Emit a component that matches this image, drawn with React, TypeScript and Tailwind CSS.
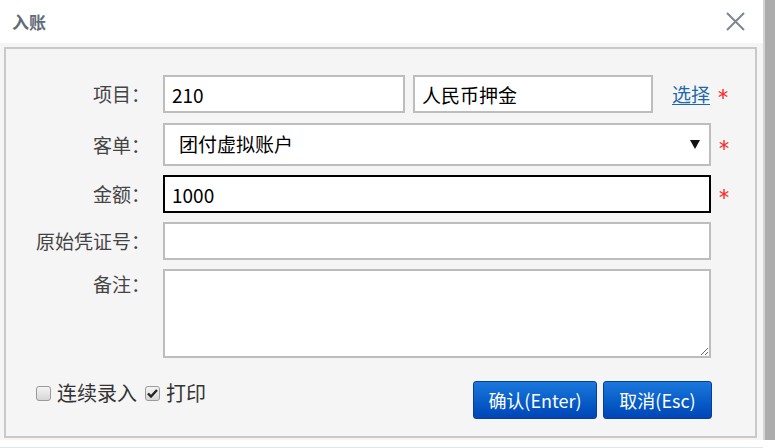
const font = "font-['Noto_Sans_CJK_SC','Noto_Sans',sans-serif]";

const Label = ({ text, top = false }: { text: string; top?: boolean }) => (
  <div className={`w-[144px] shrink-0 text-right text-[19px] text-[#444] ${top ? "self-start leading-[30px]" : "leading-[38px]"}`}>
    {text}
  </div>
);

// red required mark
const Star = () => (
  <svg className="ml-[8px] shrink-0" width="10" height="10" viewBox="0 0 10 10">
    <path d="M5 0v10M0.7 2.5l8.6 5M0.7 7.5l8.6-5" stroke="#ff2a2a" strokeWidth="1.4" />
  </svg>
);

const Check = ({ checked }: { checked?: boolean }) => (
  <span className="flex h-[15px] w-[15px] shrink-0 items-center justify-center rounded-[3px] border border-[#9a9a9a] bg-gradient-to-b from-[#f4f4f4] to-[#d6d6d6]">
    {checked && (
      <svg width="11" height="9" viewBox="0 0 11 9">
        <path d="M1 4.5l3 3L10 1" stroke="#222" strokeWidth="2.4" fill="none" />
      </svg>
    )}
  </span>
);

const App = () => {
  return (
    <div className={`flex h-[448px] w-[775px] overflow-hidden bg-white ${font}`}>
      <div className="flex w-[763px] flex-col">
        {/* header */}
        <div className="flex h-[43px] shrink-0 items-center justify-between bg-white pl-[12px] pr-[18px]">
          <span className="text-[17px] font-bold text-[#5f6b76]">入账</span>
          <svg width="19" height="19" viewBox="0 0 19 19">
            <path d="M1 1l17 17M18 1L1 18" stroke="#7d8790" strokeWidth="2" />
          </svg>
        </div>

        {/* body */}
        <div className="flex h-[397px] shrink-0 flex-col bg-[#f5f5f5] pl-[4px] pr-[6px] pt-[4px] pb-[2px]">
          <div className="flex flex-1 flex-col border-2 border-[#c9c9c9] pt-[26px]">
            {/* row 1 */}
            <div className="flex h-[38px] items-center">
              <Label text="项目：" />
              <input
                defaultValue="210"
                className="ml-[13px] h-[38px] w-[242px] border-2 border-[#bdbdbd] bg-white px-[7px] text-[19px] text-black outline-none"
              />
              <input
                defaultValue="人民币押金"
                className="ml-[8px] h-[38px] w-[240px] border-2 border-[#bdbdbd] bg-white px-[7px] text-[19px] text-black outline-none"
              />
              <a className="ml-[19px] text-[19px] text-[#1f6aa5] underline underline-offset-2">选择</a>
              <Star />
            </div>

            {/* row 2 */}
            <div className="mt-[10px] flex h-[43px] items-center">
              <Label text="客单：" />
              <div className="ml-[13px] flex h-[43px] w-[548px] items-center justify-between border-2 border-[#bdbdbd] bg-white pl-[14px] pr-[9px]">
                <span className="text-[19px] text-black">团付虚拟账户</span>
                <svg width="10" height="9" viewBox="0 0 10 9">
                  <path d="M0 0h10L5 9z" fill="#111" />
                </svg>
              </div>
              <Star />
            </div>

            {/* row 3 */}
            <div className="mt-[9px] flex h-[38px] items-center">
              <Label text="金额：" />
              <input
                defaultValue="1000"
                className="ml-[13px] h-[38px] w-[548px] border-2 border-black bg-white px-[7px] text-[19px] text-black outline-none"
              />
              <Star />
            </div>

            {/* row 4 */}
            <div className="mt-[9px] flex h-[38px] items-center">
              <Label text="原始凭证号：" />
              <input className="ml-[13px] h-[38px] w-[548px] border-2 border-[#bdbdbd] bg-white px-[7px] text-[19px] outline-none" />
            </div>

            {/* row 5 */}
            <div className="mt-[9px] flex items-start">
              <Label text="备注：" top />
              <textarea className="ml-[13px] h-[89px] w-[548px] border-2 border-[#bdbdbd] bg-white px-[7px] text-[19px] outline-none" />
            </div>

            {/* footer */}
            <div className="mt-[23px] flex items-start pl-[30px]">
              <div className="flex h-[24px] items-center">
                <Check />
                <span className="ml-[6px] text-[20px] leading-[24px] text-[#333]">连续录入</span>
                <span className="ml-[8px]">
                  <Check checked />
                </span>
                <span className="ml-[6px] text-[20px] leading-[24px] text-[#333]">打印</span>
              </div>

              <button className="ml-auto h-[38px] w-[124px] rounded-[3px] border border-[#0a3c9c] bg-gradient-to-b from-[#1b78dc] to-[#0045b6] text-[18px] text-white">
                确认(Enter)
              </button>
              <button className="ml-[6px] mr-[43px] h-[38px] w-[109px] rounded-[3px] border border-[#0a3c9c] bg-gradient-to-b from-[#1b78dc] to-[#0045b6] text-[18px] text-white">
                取消(Esc)
              </button>
            </div>
          </div>
        </div>
        <div className="h-[8px] border-b border-[#dfe6ee] bg-white" />
      </div>

      {/* right shadow strip */}
      <div className="flex w-[12px] flex-col">
        <div className="h-[440px] border-l-2 border-[#d4d4d4] bg-[#acacac]" />
      </div>
    </div>
  );
};

export default App;
